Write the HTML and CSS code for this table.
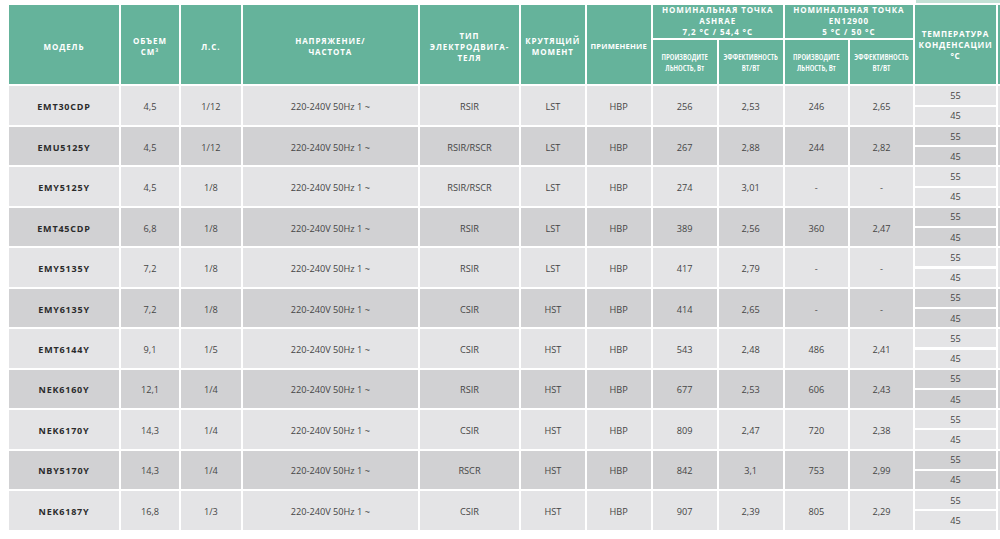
FILE: index.html
```html
<!DOCTYPE html>
<html lang="ru">
<head>
<meta charset="utf-8">
<title>Компрессоры</title>
<link rel="stylesheet" href="styles.css">
</head>
<body>
<div class="page">
  <div class="top-strip"></div>
  <div class="table">
    <div class="th span2">МОДЕЛЬ</div>
    <div class="th span2">ОБЪЕМ<br>СМ³</div>
    <div class="th span2">Л.С.</div>
    <div class="th span2">НАПРЯЖЕНИЕ/<br>ЧАСТОТА</div>
    <div class="th span2">ТИП<br>ЭЛЕКТРОДВИГА-<br>ТЕЛЯ</div>
    <div class="th span2">КРУТЯЩИЙ<br>МОМЕНТ</div>
    <div class="th span2 tight">ПРИМЕНЕНИЕ</div>
    <div class="th group">НОМИНАЛЬНАЯ ТОЧКА<br>ASHRAE<br>7,2 °C / 54,4 °C</div>
    <div class="th group">НОМИНАЛЬНАЯ ТОЧКА<br>EN12900<br>5 °C / 50 °C</div>
    <div class="th span2 temp-h">ТЕМПЕРАТУРА<br>КОНДЕНСАЦИИ<br>°C</div>
    <div class="th span2"></div>
    <div class="th sub">ПРОИЗВОДИТЕ<br>ЛЬНОСТЬ, Вт</div>
    <div class="th sub">ЭФФЕКТИВНОСТЬ<br>ВТ/ВТ</div>
    <div class="th sub">ПРОИЗВОДИТЕ<br>ЛЬНОСТЬ, Вт</div>
    <div class="th sub">ЭФФЕКТИВНОСТЬ<br>ВТ/ВТ</div>

    <div class="row light">
      <div class="td model">EMT30CDP</div><div class="td">4,5</div><div class="td">1/12</div><div class="td">220-240V 50Hz 1 ~</div><div class="td">RSIR</div><div class="td">LST</div><div class="td">HBP</div><div class="td">256</div><div class="td">2,53</div><div class="td">246</div><div class="td">2,65</div><div class="tc">55</div><div class="td"></div><div class="tc">45</div>
    </div>
    <div class="row dark">
      <div class="td model">EMU5125Y</div><div class="td">4,5</div><div class="td">1/12</div><div class="td">220-240V 50Hz 1 ~</div><div class="td">RSIR/RSCR</div><div class="td">LST</div><div class="td">HBP</div><div class="td">267</div><div class="td">2,88</div><div class="td">244</div><div class="td">2,82</div><div class="tc">55</div><div class="td"></div><div class="tc">45</div>
    </div>
    <div class="row light">
      <div class="td model">EMY5125Y</div><div class="td">4,5</div><div class="td">1/8</div><div class="td">220-240V 50Hz 1 ~</div><div class="td">RSIR/RSCR</div><div class="td">LST</div><div class="td">HBP</div><div class="td">274</div><div class="td">3,01</div><div class="td">-</div><div class="td">-</div><div class="tc">55</div><div class="td"></div><div class="tc">45</div>
    </div>
    <div class="row dark">
      <div class="td model">EMT45CDP</div><div class="td">6,8</div><div class="td">1/8</div><div class="td">220-240V 50Hz 1 ~</div><div class="td">RSIR</div><div class="td">LST</div><div class="td">HBP</div><div class="td">389</div><div class="td">2,56</div><div class="td">360</div><div class="td">2,47</div><div class="tc">55</div><div class="td"></div><div class="tc">45</div>
    </div>
    <div class="row light">
      <div class="td model">EMY5135Y</div><div class="td">7,2</div><div class="td">1/8</div><div class="td">220-240V 50Hz 1 ~</div><div class="td">RSIR</div><div class="td">LST</div><div class="td">HBP</div><div class="td">417</div><div class="td">2,79</div><div class="td">-</div><div class="td">-</div><div class="tc">55</div><div class="td"></div><div class="tc">45</div>
    </div>
    <div class="row dark">
      <div class="td model">EMY6135Y</div><div class="td">7,2</div><div class="td">1/8</div><div class="td">220-240V 50Hz 1 ~</div><div class="td">CSIR</div><div class="td">HST</div><div class="td">HBP</div><div class="td">414</div><div class="td">2,65</div><div class="td">-</div><div class="td">-</div><div class="tc">55</div><div class="td"></div><div class="tc">45</div>
    </div>
    <div class="row light">
      <div class="td model">EMT6144Y</div><div class="td">9,1</div><div class="td">1/5</div><div class="td">220-240V 50Hz 1 ~</div><div class="td">CSIR</div><div class="td">HST</div><div class="td">HBP</div><div class="td">543</div><div class="td">2,48</div><div class="td">486</div><div class="td">2,41</div><div class="tc">55</div><div class="td"></div><div class="tc">45</div>
    </div>
    <div class="row dark">
      <div class="td model">NEK6160Y</div><div class="td">12,1</div><div class="td">1/4</div><div class="td">220-240V 50Hz 1 ~</div><div class="td">RSIR</div><div class="td">HST</div><div class="td">HBP</div><div class="td">677</div><div class="td">2,53</div><div class="td">606</div><div class="td">2,43</div><div class="tc">55</div><div class="td"></div><div class="tc">45</div>
    </div>
    <div class="row light">
      <div class="td model">NEK6170Y</div><div class="td">14,3</div><div class="td">1/4</div><div class="td">220-240V 50Hz 1 ~</div><div class="td">CSIR</div><div class="td">HST</div><div class="td">HBP</div><div class="td">809</div><div class="td">2,47</div><div class="td">720</div><div class="td">2,38</div><div class="tc">55</div><div class="td"></div><div class="tc">45</div>
    </div>
    <div class="row dark">
      <div class="td model">NBY5170Y</div><div class="td">14,3</div><div class="td">1/4</div><div class="td">220-240V 50Hz 1 ~</div><div class="td">RSCR</div><div class="td">HST</div><div class="td">HBP</div><div class="td">842</div><div class="td">3,1</div><div class="td">753</div><div class="td">2,99</div><div class="tc">55</div><div class="td"></div><div class="tc">45</div>
    </div>
    <div class="row light">
      <div class="td model">NEK6187Y</div><div class="td">16,8</div><div class="td">1/3</div><div class="td">220-240V 50Hz 1 ~</div><div class="td">CSIR</div><div class="td">HST</div><div class="td">HBP</div><div class="td">907</div><div class="td">2,39</div><div class="td">805</div><div class="td">2,29</div><div class="tc">55</div><div class="td"></div><div class="tc">45</div>
    </div>
  </div>
</div>
</body>
</html>
```

FILE: styles.css
```css
html, body {
  margin: 0;
  padding: 0;
  background: #ffffff;
  overflow: hidden;
}

.page {
  width: 1000px;
  height: 539px;
  overflow: hidden;
  padding-left: 9px;
  box-sizing: border-box;
}

.top-strip {
  margin-left: 907px;
  width: 120px;
  height: 3.3px;
  background: #c2e1d5;
}

.table {
  margin-top: 1.7px;
  width: max-content;
  display: grid;
  grid-template-columns: 110px 58px 59.7px 175.3px 99px 63.7px 64px 64px 64px 63.3px 63px 81px 100px;
  grid-template-rows: 33.3px 44px repeat(22, 18.15px);
  column-gap: 2px;
  row-gap: 2.1px;
  font-family: "Open Sans", "DejaVu Sans", sans-serif;
}

.th {
  background: #65b39b;
  color: #ffffff;
  font-weight: 700;
  font-size: 8px;
  line-height: 11px;
  letter-spacing: 0.9px;
  text-align: center;
  display: flex;
  align-items: center;
  justify-content: center;
  overflow: hidden;
}

.span2 {
  grid-row: span 2;
  padding-top: 3px;
}

.tight {
  letter-spacing: 0.2px;
  font-size: 7.6px;
}

.group {
  grid-column: span 2;
  line-height: 10.8px;
}

.temp-h {
  letter-spacing: 0.7px;
  font-size: 8.2px;
  line-height: 10.8px;
  padding-top: 2px;
}

.sub {
  font-size: 8.2px;
  font-weight: 600;
  line-height: 11px;
  letter-spacing: 0;
  font-stretch: 82%;
}

.row {
  display: contents;
}

.td {
  grid-row: span 2;
  display: flex;
  align-items: center;
  justify-content: center;
  font-size: 9.2px;
  color: #454545;
  padding-top: 2px;
  box-sizing: border-box;
}

.tc {
  display: flex;
  align-items: center;
  justify-content: center;
  font-size: 9.2px;
  color: #454545;
}

.model {
  font-weight: 700;
  font-size: 9px;
  letter-spacing: 0.8px;
  color: #2b2b2b;
}

.light .td,
.light .tc {
  background: #e4e4e6;
}

.dark .td,
.dark .tc {
  background: #d1d1d3;
}
```
